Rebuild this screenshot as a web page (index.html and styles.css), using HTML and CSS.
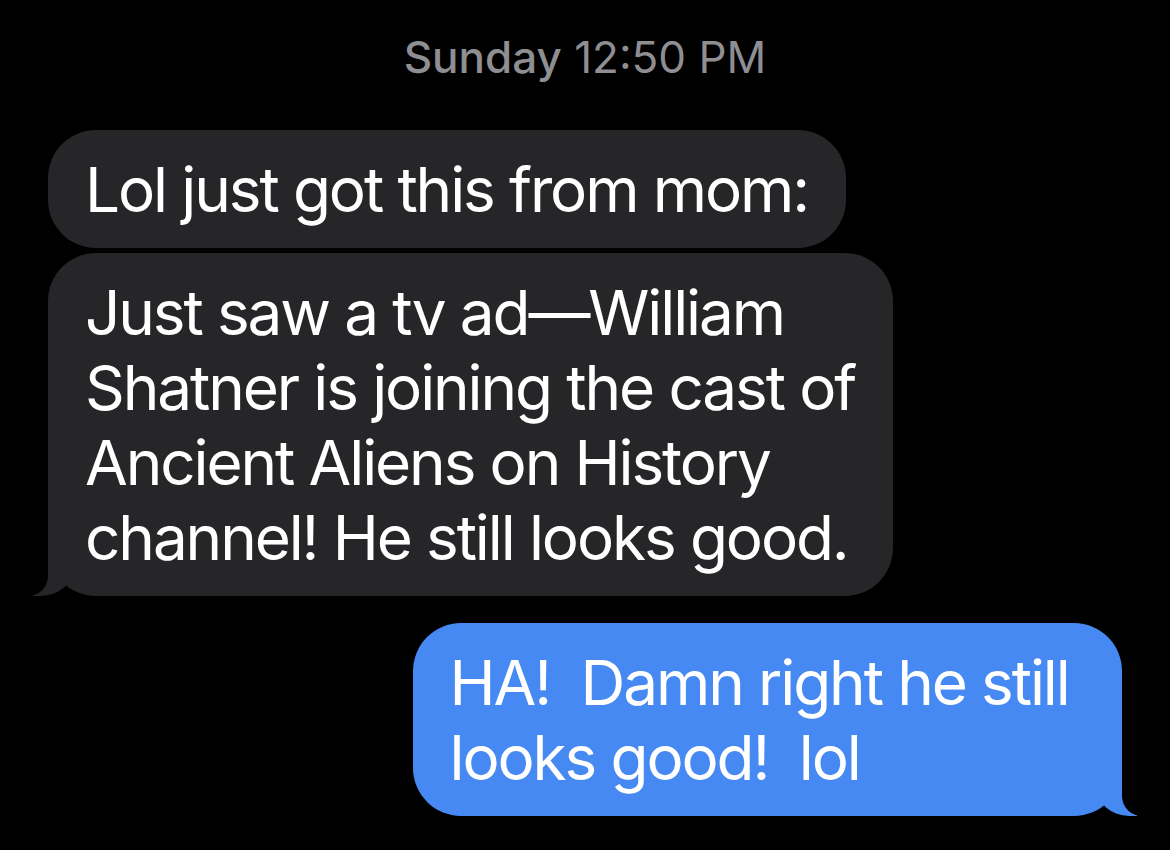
FILE: index.html
```html
<!DOCTYPE html>
<html lang="en">
<head>
<meta charset="utf-8">
<title>Messages</title>
<link rel="stylesheet" href="styles.css">
</head>
<body>
<main class="thread">
  <div class="timestamp"><span class="day">Sunday</span> 12:50 PM</div>
  <div class="group them-group">
    <div class="bubble them">Lol just got this from mom:</div>
    <div class="bubble them tail">Just saw a tv ad—William<br>Shatner is joining the cast of<br>Ancient Aliens on History<br>channel! He still looks good.</div>
  </div>
  <div class="group me-group">
    <div class="bubble me tail">HA!&nbsp; Damn right he still&nbsp;<br>looks good!&nbsp; lol</div>
  </div>
</main>
</body>
</html>
```
FILE: styles.css
```css
html, body {
  margin: 0;
  padding: 0;
  background: #000;
}

body {
  font-family: Inter, "Noto Sans", "Liberation Sans", sans-serif;
  color: #fff;
}

.thread {
  display: flex;
  flex-direction: column;
  padding: 31px 48px 0 48px;
}

.timestamp {
  align-self: center;
  font-size: 44px;
  line-height: 53px;
  color: #8e8e93;
  font-weight: 400;
  margin-bottom: 46px;
}

.timestamp .day {
  font-weight: 500;
}

.group {
  display: flex;
  flex-direction: column;
  gap: 5px;
}

.them-group {
  align-items: flex-start;
}

.me-group {
  align-items: flex-end;
  margin-top: 27px;
}

.bubble {
  position: relative;
  font-size: 62px;
  line-height: 75px;
  letter-spacing: -2.1px;
  padding: 22px 38px 21px 37px;
  border-radius: 48px;
  white-space: nowrap;
}

.them {
  background: #262629;
}

.me {
  background: #4689f3;
}

.bubble.tail::before,
.bubble.tail::after {
  content: "";
  position: absolute;
  bottom: 0;
  height: 50px;
}

.them.tail::before {
  left: -15px;
  width: 40px;
  background: #262629;
  border-bottom-right-radius: 32px 28px;
}

.them.tail::after {
  left: -52px;
  width: 52px;
  background: #000;
  border-bottom-right-radius: 20px;
}

.me.tail::before {
  right: -15px;
  width: 40px;
  background: #4689f3;
  border-bottom-left-radius: 32px 28px;
}

.me.tail::after {
  right: -52px;
  width: 52px;
  background: #000;
  border-bottom-left-radius: 20px;
}
```
